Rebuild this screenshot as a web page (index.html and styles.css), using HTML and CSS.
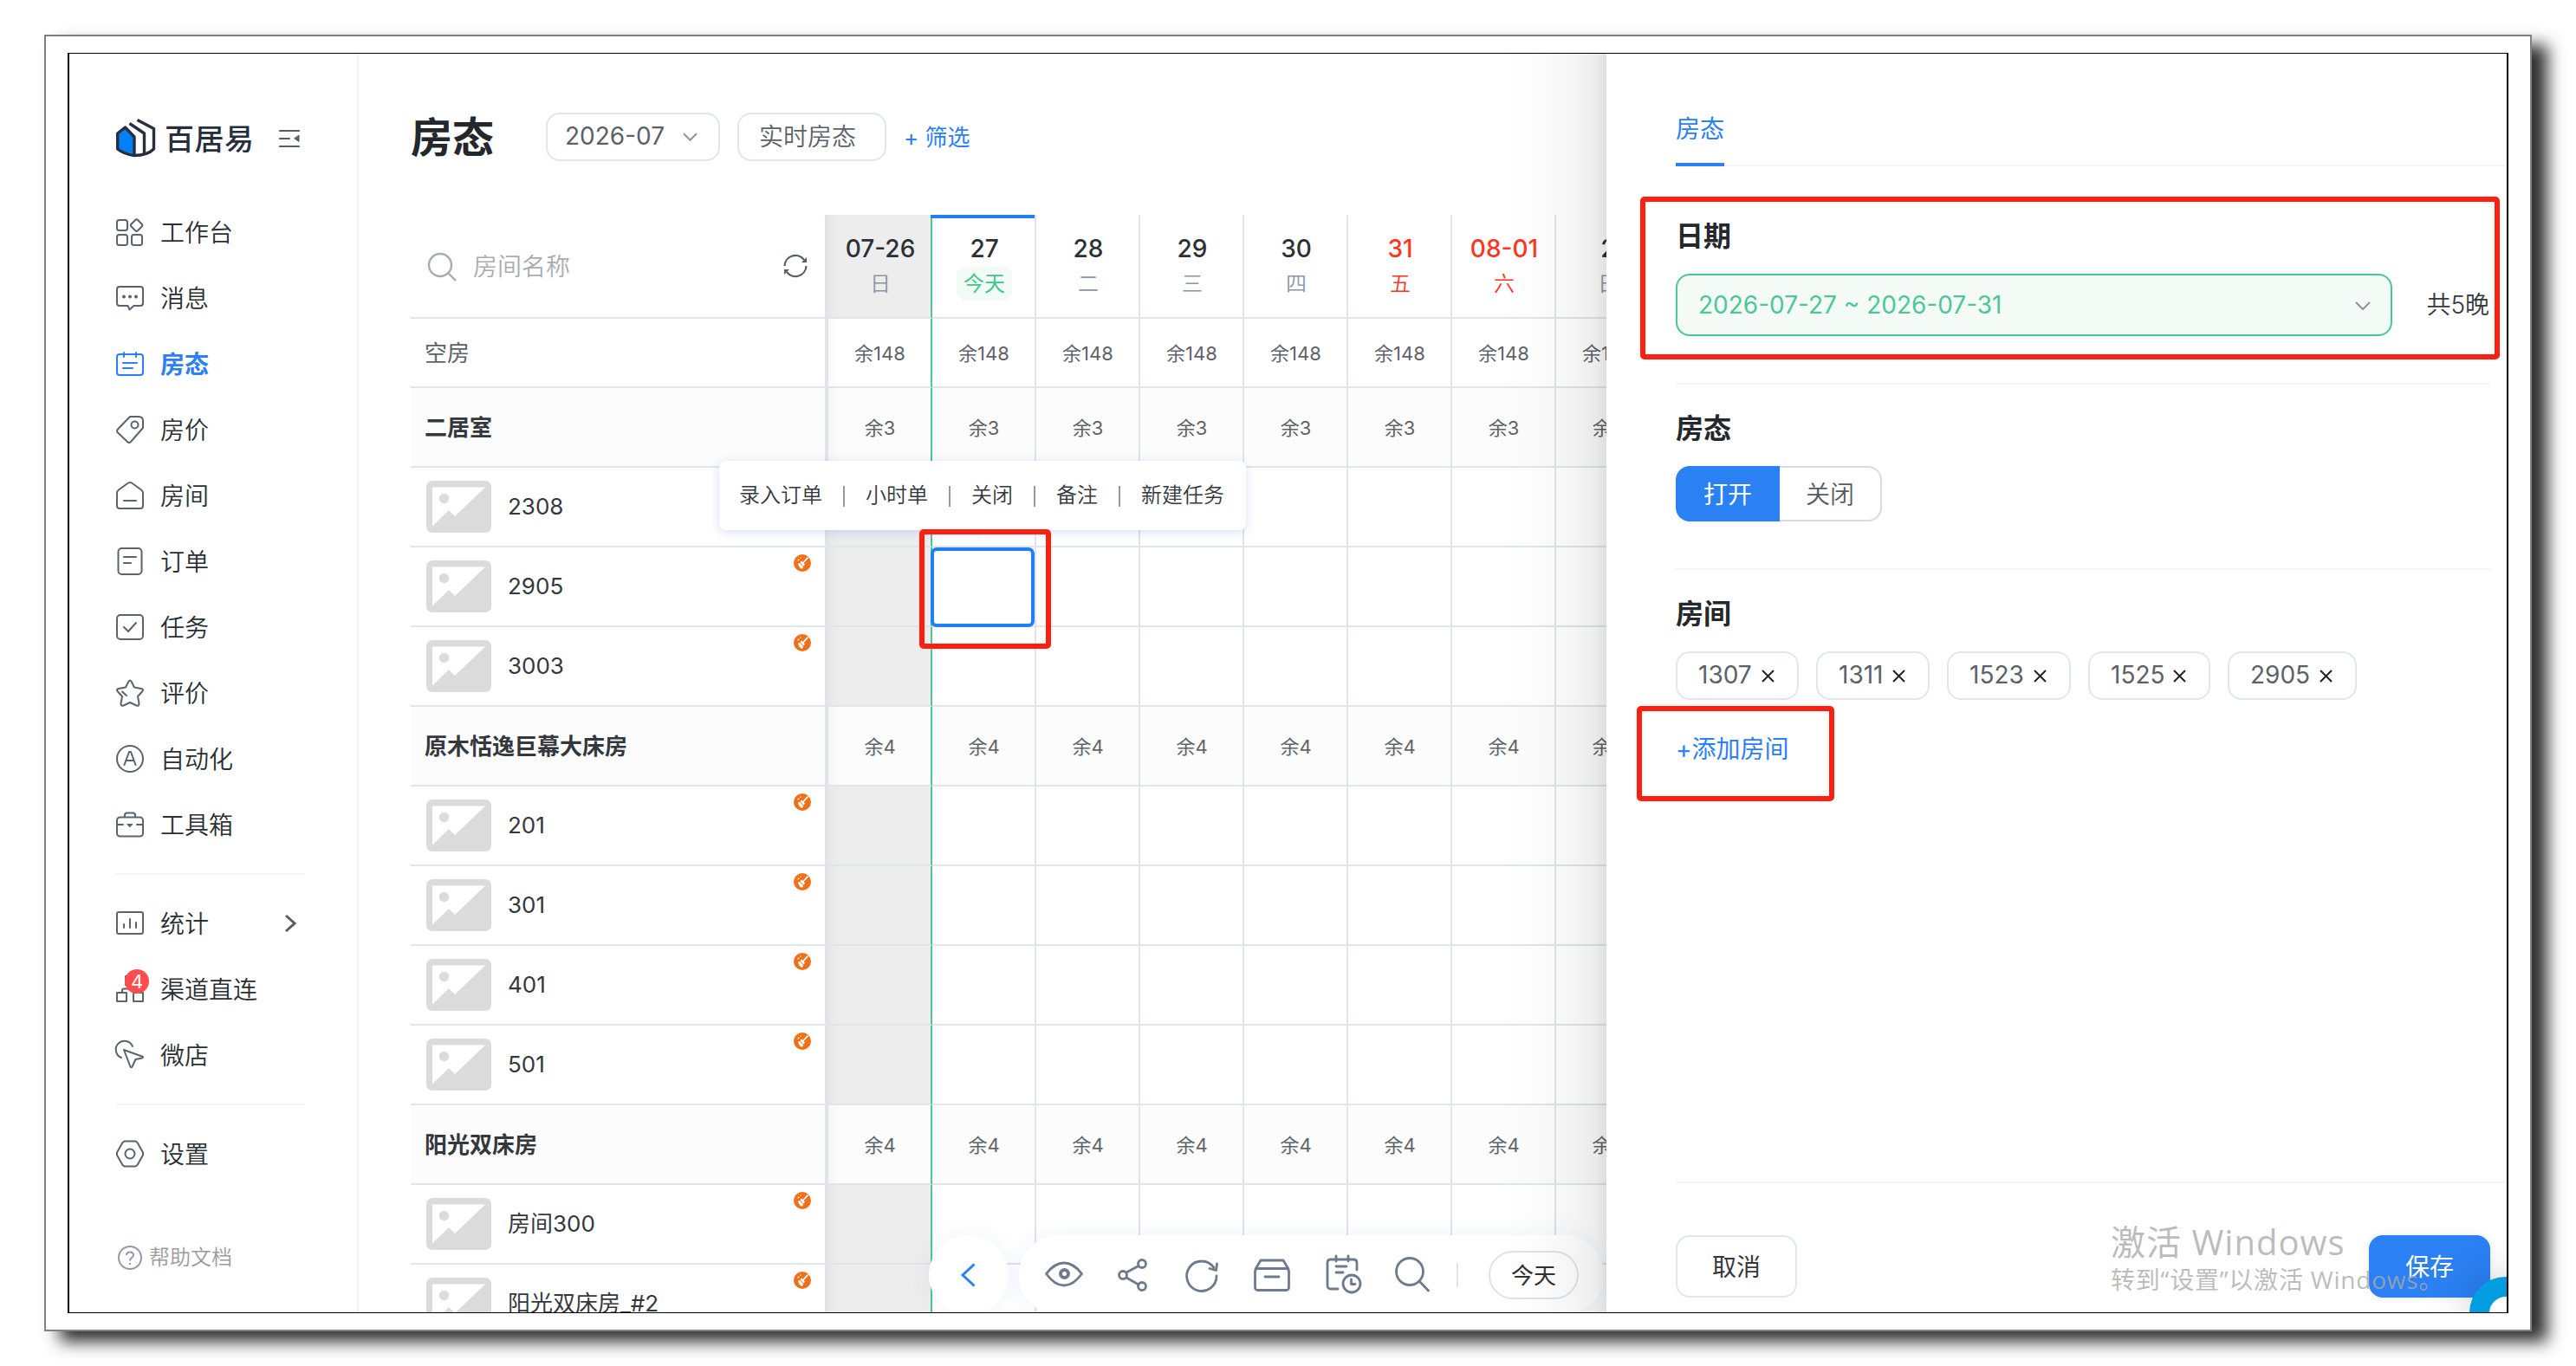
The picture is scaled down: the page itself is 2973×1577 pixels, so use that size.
FILE: index.html
```
<!DOCTYPE html>
<html lang="zh-CN">
<head>
<meta charset="utf-8">
<title>百居易 - 房态</title>
<link rel="stylesheet" href="styles.css">
</head>
<body>
<svg class="defs" width="0" height="0">
  <symbol id="thumb" viewBox="0 0 75 60"><rect width="75" height="60" rx="7" fill="#dbdbdb"/><path d="M7 7.5H68L33 41L26 34L7 52.5Z" fill="#fff"/><circle cx="20.5" cy="20.5" r="5.7" fill="#dbdbdb"/></symbol>
  <symbol id="clean" viewBox="0 0 20 20"><circle cx="10" cy="10" r="10" fill="#f07019"/><path d="M16 4.200L11.500 9" stroke="#fff" stroke-width="1.8" stroke-linecap="round"/><path d="M9 7.500L13 11.500L11.500 13.500L7.500 9.500Z" fill="#fff"/><path d="M5 10.500L7 10L11 14L10.500 16L8.500 16.800Q5.500 14.500 5 10.500Z" fill="#fff"/><circle cx="5.500" cy="6.500" r="1" fill="#fff"/><circle cx="8" cy="4.300" r=".7" fill="#fff"/></symbol>
  <symbol id="down" viewBox="0 0 18 10"><path d="M1 1L9 9L17 1" fill="none" stroke="#8b939d" stroke-width="2"/></symbol>
</svg>
<div class="sheet">
<div class="shot">
  <aside class="side">
    <div class="brand">
      <svg width="46" height="46" viewBox="0 0 46 46" fill="none" stroke="#272f3f" stroke-width="3.4" stroke-linejoin="round"><path d="M1.700 17L10.500 10L21 21V42.500Q9 41 1.700 35Z" fill="#0080f8"/><path d="M15.500 5.500L32.500 17V41"/><path d="M24.500 1.500L43.500 11.500V35Q36 42.500 21 42.500"/></svg>
      <span class="brand-name">百居易</span>
      <svg class="fold" width="24" height="24" viewBox="0 0 24 24" stroke="#535e68" stroke-width="2.2" stroke-linecap="round"><path d="M1 3H23M1 12H12M1 21H23"/><path d="M23 8.500V15.500L18 12Z" fill="#535e68" stroke-width="1"/></svg>
    </div>
    <nav class="nav">
      <a class="item"><svg class="ico" viewBox="0 0 32 32"><rect x="1" y="2" width="12" height="12" rx="2.500"/><rect x="1" y="19" width="12" height="12" rx="2.500"/><rect x="18" y="19" width="12" height="12" rx="2.500"/><rect x="18.300" y="2.800" width="10.600" height="10.600" rx="2" transform="rotate(45 23.600 8.100)"/></svg><span>工作台</span></a>
      <a class="item"><svg class="ico" viewBox="0 0 32 32"><path d="M4 3H28Q31 3 31 6V22Q31 25 28 25H20.500L15.500 29.500L13.500 25H4Q1 25 1 22V6Q1 3 4 3Z"/><path d="M9 14.500h.01M16 14.500h.01M23 14.500h.01" stroke-width="4"/></svg><span>消息</span></a>
      <a class="item on"><svg class="ico" viewBox="0 0 32 32"><rect x="1" y="5" width="30" height="24" rx="3"/><path d="M9 3V8M23 3V8M8 15H24M8 21H19"/></svg><span>房态</span></a>
      <a class="item"><svg class="ico" viewBox="0 0 32 32"><path d="M16 1H26Q31 1 31 6V14L17 30Q15 32 13 30L2 19.500Q0 17.500 2 15.500Z"/><circle cx="21.500" cy="10.500" r="4"/></svg><span>房价</span></a>
      <a class="item"><svg class="ico" viewBox="0 0 32 32"><path d="M14 1.500Q16 .3 18 1.500L29 9.500Q31 11 31 13V28Q31 31 28 31H4Q1 31 1 28V13Q1 11 3 9.500Z"/><path d="M9 22H23"/></svg><span>房间</span></a>
      <a class="item"><svg class="ico" viewBox="0 0 32 32"><rect x="2.500" y="1" width="27" height="30" rx="4"/><path d="M9 11H23M9 18H17"/></svg><span>订单</span></a>
      <a class="item"><svg class="ico" viewBox="0 0 32 32"><rect x="1" y="2" width="30" height="28" rx="4"/><path d="M9 16L14 21L23 11"/></svg><span>任务</span></a>
      <a class="item"><svg class="ico" viewBox="0 0 32 32"><path d="M14.300 3Q16 .2 17.700 3L21 9.500L29 11Q32.500 12 30 14.500L25 20L26.500 28Q26.500 31.500 23.500 30.500L16 27L8.500 30.500Q5.500 31.500 5.500 28L7 20L2 14.500Q-.5 12 3 11L11 9.500Z"/><path d="M7 14.500L12 19"/></svg><span>评价</span></a>
      <a class="item"><svg class="ico" viewBox="0 0 32 32"><circle cx="16" cy="16" r="15"/><path d="M9.500 23L15 8H17L22.500 23M12 18H20"/></svg><span>自动化</span></a>
      <a class="item"><svg class="ico" viewBox="0 0 32 32"><rect x="1" y="7.500" width="30" height="22" rx="3.500"/><path d="M10 7V5Q10 2.500 12.500 2.500H19.500Q22 2.500 22 5V7M1 16H8M24 16H31"/><path d="M13 15.500H19L16 18.500Z" fill="currentColor" stroke-width="1"/></svg><span>工具箱</span></a>
      <hr class="rule">
      <a class="item"><svg class="ico" viewBox="0 0 32 32"><rect x="1" y="3" width="30" height="25" rx="2"/><path d="M9 17V21M16 11V21M23 15V21"/></svg><span>统计</span><svg class="more" width="14" height="22" viewBox="0 0 14 22"><path d="M2 2L12 11L2 20" fill="none" stroke="#535e68" stroke-width="3"/></svg></a>
      <a class="item"><svg class="ico" viewBox="0 0 32 32"><path d="M1 20H12V30H1ZM20 20H31V30H20ZM11 1H21V11H11ZM7 19V17Q7 15.500 9 15.500H24Q25.500 15.500 25.500 17V19M16 11V15"/></svg><span>渠道直连</span><b class="count">4</b></a>
      <a class="item"><svg class="ico" viewBox="0 0 32 32"><path d="M6 19A10 10 0 1 1 19 6"/><path d="M9 10L31 18Q31 19 30 19.500L22.500 21L18.500 29.500Q17.500 31 16.500 29.500Z"/></svg><span>微店</span></a>
      <hr class="rule">
      <a class="item"><svg class="ico" viewBox="0 0 32 32"><path d="M9.500 1.500H22.500L24.500 3L31 14.500V17.500L24.500 29L22.500 30.500H9.500L7.500 29L1 17.500V14.500L7.500 3Z"/><circle cx="16" cy="16" r="5.500"/></svg><span>设置</span></a>
      <a class="help"><svg width="28" height="28" viewBox="0 0 28 28" fill="none" stroke="#949ba6" stroke-width="2"><circle cx="14" cy="14" r="13"/><path d="M10 11Q10 7.500 14 7.500T18 11Q18 13 16 14T14 17.500M14 20V22"/></svg>帮助文档</a>
    </nav>
  </aside>

  <main class="main">
    <header class="bar">
      <h1 class="title">房态</h1>
      <div class="pick">2026-07<svg width="17" height="10"><use href="#down"/></svg></div>
      <div class="live">实时房态</div>
      <a class="filter">+ 筛选</a>
    </header>
    <section class="table">
      <div class="row head">
        <div class="name"><svg width="34" height="34" viewBox="0 0 34 34" fill="none" stroke="#a9abad" stroke-width="2.400"><circle cx="15" cy="15" r="13"/><path d="M24 24L33 33"/></svg><span class="ph">房间名称</span><svg class="sync" width="28" height="28" viewBox="0 0 28 28" fill="none" stroke="#535e68" stroke-width="2.200"><path d="M1.500 14A12.500 12.500 0 0 1 24 7M26.500 14A12.500 12.500 0 0 1 4 21"/><path d="M27 4V10H21ZM1 24V18H7Z" fill="#535e68" stroke="none"/></svg></div>
        <div class="cell"><b>07-26</b><span>日</span></div><div class="cell now"><b>27</b><span>今天</span></div><div class="cell"><b>28</b><span>二</span></div><div class="cell"><b>29</b><span>三</span></div><div class="cell"><b>30</b><span>四</span></div><div class="cell red"><b>31</b><span>五</span></div><div class="cell red"><b>08-01</b><span>六</span></div><div class="cell"><b>2</b><span>日</span></div>
      </div>
      <div class="row free"><div class="name">空房</div><div class="cell">余148</div><div class="cell">余148</div><div class="cell">余148</div><div class="cell">余148</div><div class="cell">余148</div><div class="cell">余148</div><div class="cell">余148</div><div class="cell">余148</div></div>
      <div class="row type"><div class="name">二居室</div><div class="cell">余3</div><div class="cell">余3</div><div class="cell">余3</div><div class="cell">余3</div><div class="cell">余3</div><div class="cell">余3</div><div class="cell">余3</div><div class="cell">余3</div></div>
      <div class="row room"><div class="name"><svg class="pic"><use href="#thumb"/></svg>2308</div><div class="cell"></div><div class="cell"></div><div class="cell"></div><div class="cell"></div><div class="cell"></div><div class="cell"></div><div class="cell"></div><div class="cell"></div></div>
      <div class="row room"><div class="name"><svg class="pic"><use href="#thumb"/></svg>2905<svg class="dirty"><use href="#clean"/></svg></div><div class="cell"></div><div class="cell"></div><div class="cell"></div><div class="cell"></div><div class="cell"></div><div class="cell"></div><div class="cell"></div><div class="cell"></div></div>
      <div class="row room"><div class="name"><svg class="pic"><use href="#thumb"/></svg>3003<svg class="dirty"><use href="#clean"/></svg></div><div class="cell"></div><div class="cell"></div><div class="cell"></div><div class="cell"></div><div class="cell"></div><div class="cell"></div><div class="cell"></div><div class="cell"></div></div>
      <div class="row type"><div class="name">原木恬逸巨幕大床房</div><div class="cell">余4</div><div class="cell">余4</div><div class="cell">余4</div><div class="cell">余4</div><div class="cell">余4</div><div class="cell">余4</div><div class="cell">余4</div><div class="cell">余4</div></div>
      <div class="row room"><div class="name"><svg class="pic"><use href="#thumb"/></svg>201<svg class="dirty"><use href="#clean"/></svg></div><div class="cell"></div><div class="cell"></div><div class="cell"></div><div class="cell"></div><div class="cell"></div><div class="cell"></div><div class="cell"></div><div class="cell"></div></div>
      <div class="row room"><div class="name"><svg class="pic"><use href="#thumb"/></svg>301<svg class="dirty"><use href="#clean"/></svg></div><div class="cell"></div><div class="cell"></div><div class="cell"></div><div class="cell"></div><div class="cell"></div><div class="cell"></div><div class="cell"></div><div class="cell"></div></div>
      <div class="row room"><div class="name"><svg class="pic"><use href="#thumb"/></svg>401<svg class="dirty"><use href="#clean"/></svg></div><div class="cell"></div><div class="cell"></div><div class="cell"></div><div class="cell"></div><div class="cell"></div><div class="cell"></div><div class="cell"></div><div class="cell"></div></div>
      <div class="row room"><div class="name"><svg class="pic"><use href="#thumb"/></svg>501<svg class="dirty"><use href="#clean"/></svg></div><div class="cell"></div><div class="cell"></div><div class="cell"></div><div class="cell"></div><div class="cell"></div><div class="cell"></div><div class="cell"></div><div class="cell"></div></div>
      <div class="row type"><div class="name">阳光双床房</div><div class="cell">余4</div><div class="cell">余4</div><div class="cell">余4</div><div class="cell">余4</div><div class="cell">余4</div><div class="cell">余4</div><div class="cell">余4</div><div class="cell">余4</div></div>
      <div class="row room"><div class="name"><svg class="pic"><use href="#thumb"/></svg>房间300<svg class="dirty"><use href="#clean"/></svg></div><div class="cell"></div><div class="cell"></div><div class="cell"></div><div class="cell"></div><div class="cell"></div><div class="cell"></div><div class="cell"></div><div class="cell"></div></div>
      <div class="row room"><div class="name"><svg class="pic"><use href="#thumb"/></svg>阳光双床房_#2<svg class="dirty"><use href="#clean"/></svg></div><div class="cell"></div><div class="cell"></div><div class="cell"></div><div class="cell"></div><div class="cell"></div><div class="cell"></div><div class="cell"></div><div class="cell"></div></div>
    </section>
  </main>

  <div class="picked"></div>
  <div class="menu"><span>录入订单</span><i></i><span>小时单</span><i></i><span>关闭</span><i></i><span>备注</span><i></i><span>新建任务</span></div>
  <div class="mark mark-cell"></div>

  <div class="back"><svg width="18" height="28" viewBox="0 0 18 28"><path d="M16.500 1.500L3 14L16.500 26.500" fill="none" stroke="#2b80f3" stroke-width="3"/></svg></div>
  <div class="tools">
    <svg width="44" height="44" viewBox="0 0 44 44"><path d="M1.500 20.500Q11 8 22 8T42.500 20.500Q33 34 22 34T1.500 20.500Z"/><circle cx="22.500" cy="20.500" r="4.500" stroke-width="4"/></svg>
    <svg width="34" height="44" viewBox="0 0 34 44"><circle cx="6" cy="22" r="4.500"/><circle cx="28" cy="9" r="4.500"/><circle cx="28" cy="35" r="4.500"/><path d="M10 19L24 11.500M10 25L24 33"/></svg>
    <svg width="38" height="44" viewBox="0 0 38 44"><path d="M36 23A17.200 17.200 0 1 1 33 13.500"/><path d="M36.500 9L35.500 16.500L28 14.500"/></svg>
    <svg width="42" height="44" viewBox="0 0 42 44"><path d="M2 15L8 5H34L40 15M13 24H29"/><rect x="1.500" y="14.500" width="39" height="25" rx="3"/></svg>
    <svg width="42" height="44" viewBox="0 0 42 44"><path d="M14 38H6Q2 38 2 34V8Q2 4 6 4H32Q36 4 36 8V16M12 0V6M26 0V6M12 12H24M12 19H20"/><circle cx="30" cy="32" r="10"/><path d="M29.500 27V32.500H34"/></svg>
    <svg width="40" height="44" viewBox="0 0 40 44"><circle cx="17" cy="18" r="15.500"/><path d="M28 29L38.500 40"/></svg>
    <i class="split"></i>
    <span class="today">今天</span>
  </div>

  <div class="haze"></div>
  <section class="drawer">
    <div class="tabs"><span class="tab">房态</span></div>
    <div class="body">
      <div class="block">
        <h2>日期</h2>
        <div class="dates"><div class="range">2026-07-27 ~ 2026-07-31<svg width="18" height="10"><use href="#down"/></svg></div><span>共5晚</span></div>
      </div>
      <div class="block">
        <h2>房态</h2>
        <div class="switch"><span class="yes">打开</span><span class="no">关闭</span></div>
      </div>
      <div class="block last">
        <h2>房间</h2>
        <div class="tags"><span class="tag t1">1307<svg class="x" viewBox="0 0 15 15"><path d="M1 1L14 14M14 1L1 14"/></svg></span><span class="tag t2">1311<svg class="x" viewBox="0 0 15 15"><path d="M1 1L14 14M14 1L1 14"/></svg></span><span class="tag t3">1523<svg class="x" viewBox="0 0 15 15"><path d="M1 1L14 14M14 1L1 14"/></svg></span><span class="tag t4">1525<svg class="x" viewBox="0 0 15 15"><path d="M1 1L14 14M14 1L1 14"/></svg></span><span class="tag t5">2905<svg class="x" viewBox="0 0 15 15"><path d="M1 1L14 14M14 1L1 14"/></svg></span></div>
        <a class="add">+添加房间</a>
      </div>
    </div>
    <footer class="foot"><span class="btn">取消</span><span class="btn save">保存</span></footer>
  </section>
  <div class="mark mark-date"></div>
  <div class="mark mark-add"></div>
  <div class="bubble"></div>
  <div class="activate"><p class="a1">激活 Windows</p><p class="a2">转到“设置”以激活 Windows。</p></div>
</div>
</div>
</body>
</html>
```
FILE: styles.css
```
* { box-sizing: border-box; }
body { margin: 0; padding: 40px 0 0 51px; height: 1577px; overflow: hidden; background: #fff; color: #34383d; font: 28px/1.2 Inter, "Noto Sans CJK SC", sans-serif; }
.defs { position: absolute; }
svg { flex: none; }
h1, h2, p { margin: 0; }

.sheet { width: 2871px; height: 1497px; padding: 19px 0 0 25px; border: 2px solid #808080; background: #fff; box-shadow: 18px 12px 18px #303030; }
.shot { position: relative; display: flex; width: 2817px; height: 1455px; border: solid #000; border-width: 1px 2px; overflow: hidden; background: #fff; }

.side { flex: none; width: 334px; padding: 75px 0 0 54px; border-right: 2px solid #f0f1f6; }
.brand { display: flex; align-items: center; height: 46px; margin-bottom: 47px; }
.brand-name { margin-left: 10px; width: 104px; padding-top: 1px; font-size: 34px; font-weight: 500; line-height: 46px; letter-spacing: .5px; color: #272f3f; white-space: nowrap; }
.fold { margin-left: 28px; }
.nav { width: 218px; font-weight: 350; }
.item { position: relative; display: flex; align-items: center; gap: 19px; height: 76px; color: #2a2f34; white-space: nowrap; }
.item span { padding-top: 3px; }
.item.on { color: #2b80f3; font-weight: 700; }
.ico { width: 32px; height: 32px; fill: none; stroke: #5a646d; color: #5a646d; stroke-width: 2; stroke-linecap: round; stroke-linejoin: round; overflow: visible; }
.on .ico { stroke: #2b80f3; }
.more { margin-left: auto; margin-right: 10px; }
.rule { height: 2px; margin: 18px 0; border: 0; background: #f4f5fa; }
.count { position: absolute; left: 10px; top: 15px; width: 28px; height: 28px; border-radius: 50%; background: #ff4d4f; color: #fff; font-size: 22px; line-height: 28px; font-weight: 400; text-align: center; }
.help { display: flex; align-items: center; gap: 8px; height: 40px; margin: 62px 0 0 2px; font-size: 24px; color: #9b9b9b; }

.main { flex: none; width: 1440px; padding: 68px 0 0 60px; overflow: hidden; }
.bar { display: flex; align-items: center; height: 56px; margin-bottom: 62px; }
.title { width: 96px; margin-right: 60px; padding-top: 2px; font-size: 48px; line-height: 56px; color: #24282c; white-space: nowrap; }
.pick, .live { display: flex; align-items: center; justify-content: space-between; height: 56px; border: 2px solid #e2e5ea; border-radius: 16px; color: #5b6167; }
.pick { width: 201px; padding: 0 24px 0 20px; margin-right: 20px; }
.live { width: 172px; padding: 2px 0 0 23px; margin-right: 20px; font-weight: 350; }
.filter { color: #2b80f3; font-size: 26px; padding-top: 1px; }

.row { display: flex; height: 92px; }
.name { position: relative; flex: none; display: flex; align-items: center; width: 482px; border-right: 4px solid #e1e4ea; border-bottom: 2px solid #e1e4ea; padding: 1px 0 0 16px; font-size: 26px; white-space: nowrap; }
.cell { flex: none; display: flex; align-items: center; justify-content: center; width: 120px; border-right: 2px solid #e1e4ea; border-bottom: 2px solid #e1e4ea; padding: 2px 0 0 1px; font-size: 22px; color: #5f6469; }
.name + .cell { border-right-color: #4cc795; background-image: linear-gradient(90deg, rgba(90,95,110,.04), transparent 12px); }
.head { height: 120px; }
.head .cell { flex-direction: column; justify-content: flex-start; padding: 21px 0 0 2px; color: #8a96a3; font-size: 24px; }
.head .cell b { font-size: 28px; line-height: 36px; font-weight: 450; color: #2c3136; }
.head .cell span { margin-top: 2px; height: 40px; line-height: 42px; padding: 0 8px; font-weight: 350; }
.head .name { padding-left: 19px; }
.ph { margin-left: 19px; padding-top: 2px; font-size: 28px; font-weight: 350; color: #a9adb3; }
.sync { margin: -2px 20px 0 auto; }
.head .now { position: relative; }
.head .now::before { content: ""; position: absolute; left: -2px; top: 0; width: 120px; height: 4px; background: #1f80f5; }
.head .now span { border-radius: 12px; background: #f3fbf7; color: #3fc78c; font-weight: 400; }
.head .red, .head .red b { color: #ff3524; }
.head .name + .cell, .room .name + .cell { background-color: #ededed; }
.free { height: 80px; }
.free .name { padding-top: 2px; color: #5a636b; }
.type { background: #fcfcfc; }
.type .name { padding-top: 2px; font-weight: 700; color: #34383d; }
.room .name { padding: 0 0 0 18px; }
.pic { width: 75px; height: 60px; margin-right: 19px; }
.dirty { position: absolute; left: 442px; top: 8px; width: 20px; height: 20px; }

.picked { position: absolute; left: 994px; top: 570px; width: 120px; height: 92px; border: 4px solid #1f80f5; border-radius: 7px; background: #fff; }
.menu { position: absolute; left: 750px; top: 470px; display: flex; align-items: center; justify-content: space-between; width: 608px; height: 80px; padding: 1px 25px 0 23px; border-radius: 8px; background: #fff; box-shadow: 0 2px 12px rgba(50,90,210,.2); font-size: 24px; font-weight: 350; white-space: nowrap; }
.menu::after { content: ""; position: absolute; left: 297px; top: 80px; border: 7px solid transparent; border-top: 10px solid #fff; border-bottom: 0; }
.menu i { width: 2px; height: 24px; background: #999; }
.mark { position: absolute; border: 6px solid #ff1f10; border-radius: 5px; }
.mark-cell { left: 981px; top: 549px; width: 152px; height: 138px; }
.mark-date { left: 1813px; top: 165px; width: 992px; height: 188px; }
.mark-add { left: 1809px; top: 753px; width: 228px; height: 110px; }

.back { position: absolute; left: 992px; top: 1364px; display: flex; align-items: center; justify-content: center; width: 92px; height: 92px; padding-right: 2px; border-radius: 50%; background: #fff; box-shadow: 0 0 26px rgba(50,90,210,.08); }
.tools { position: absolute; left: 1096px; top: 1364px; display: flex; align-items: center; width: 675px; height: 92px; padding: 0 29px 0 30px; border-radius: 46px; background: #fff; box-shadow: 0 0 26px rgba(50,90,210,.08); }
.tools svg { margin-right: 41px; fill: none; stroke: #6f7b8d; stroke-width: 2.800; stroke-linecap: round; stroke-linejoin: round; overflow: visible; }
.tools svg:nth-child(1) { margin-right: 40px; }
.tools svg:nth-child(2) { margin-right: 44px; }
.tools svg:nth-child(5) { margin-right: 38px; }
.tools svg:nth-child(6) { margin-right: 31px; }
.split { width: 2px; height: 28px; background: #dfe2e9; }
.today { margin-left: auto; width: 104px; height: 56px; border: 2px solid #dfe2e9; border-radius: 28px; text-align: center; font-size: 26px; line-height: 54px; color: #2c3136; }

.haze { position: absolute; left: 1654px; top: 0; width: 120px; height: 1453px; background: linear-gradient(90deg, transparent, rgba(0,0,0,.012) 35%, rgba(0,0,0,.045) 70%, rgba(0,0,0,.075) 90%, rgba(0,0,0,.12)); }
.drawer { position: absolute; left: 1774px; top: 0; width: 1039px; height: 1453px; display: flex; flex-direction: column; padding: 62px 0 0 80px; background: #fff; }
.tabs { display: flex; height: 68px; border-bottom: 2px solid #f4f5fa; }
.tab { height: 68px; border-bottom: 4px solid #2b80f3; color: #2b80f3; line-height: 50px; }
.body { flex: 1; width: 940px; }
.block { padding-top: 56px; border-bottom: 2px solid #f4f5fa; }
.block:nth-child(1) { height: 252px; }
.block:nth-child(2) { height: 214px; padding-top: 26px; }
.block:nth-child(3) { padding-top: 26px; }
.block h2 { height: 48px; margin-bottom: 20px; font-size: 32px; line-height: 49px; color: #24282c; }
.block.last { border: 0; }
.dates { display: flex; align-items: center; justify-content: space-between; white-space: nowrap; font-weight: 350; }
.dates > span { padding-top: 2px; margin-right: 1px; }
.range { display: flex; align-items: center; justify-content: space-between; width: 827px; height: 72px; padding: 1px 23px 0 24px; border: 2px solid #47c98f; border-radius: 16px; background: #f4fbf7; color: #4cc795; font-weight: 400; }
.switch { display: flex; width: 238px; height: 64px; line-height: 66px; text-align: center; font-weight: 350; }
.yes { width: 120px; border-radius: 16px 0 0 16px; background: #2b80f3; color: #fff; font-weight: 400; }
.no { width: 118px; border: 2px solid #dadada; border-left: 0; border-radius: 0 16px 16px 0; line-height: 62px; color: #555b60; }
.tags { display: flex; gap: 20px; }
.tag { display: flex; align-items: center; justify-content: space-between; height: 56px; padding: 0 26px 0 24px; border: 2px solid #e2e5ea; border-radius: 16px; color: #5b6167; }
.t1 { width: 142px; }
.t2 { width: 131px; }
.t3 { width: 143px; }
.t4 { width: 141px; }
.t5 { width: 149px; }
.x { width: 15px; height: 15px; fill: none; stroke: #222; stroke-width: 2; }
.add { display: block; margin-top: 38px; line-height: 38px; color: #2b80f3; }
.foot { display: flex; justify-content: space-between; height: 151px; padding: 60px 19px 0 0; border-top: 2px solid #f4f5fa; }
.btn { width: 140px; height: 72px; border: 2px solid #e2e5ea; border-radius: 16px; text-align: center; line-height: 70px; }
.save { border-color: #2b80f3; background: #2b80f3; color: #fff; box-shadow: 0 0 10px rgba(0,0,0,.1); }
.bubble { position: absolute; left: 2770px; top: 1412px; width: 84px; height: 84px; border: 23px solid #009de0; border-radius: 50%; background: #fff; box-shadow: 0 0 50px rgba(0,0,0,.18); }
.activate { position: absolute; left: 2356px; top: 1345px; color: rgba(170,170,170,.78); font-family: "Open Sans", "Noto Sans CJK SC", sans-serif; font-weight: 400; white-space: nowrap; }
.a1 { font-size: 40px; line-height: 53px; letter-spacing: 1px; }
.a2 { font-size: 28px; line-height: 35px; letter-spacing: .8px; }
```
